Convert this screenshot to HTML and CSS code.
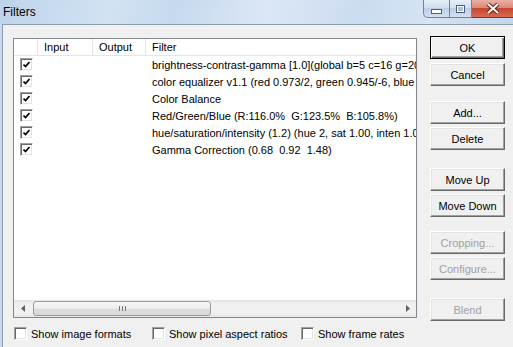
FILE: index.html
```html
<!DOCTYPE html>
<html lang="en">
<head>
    <meta charset="UTF-8">
    <title>Filters</title>
    <link rel="stylesheet" href="styles.css">
</head>
<body>
    <div class="window">
        <div class="titlebar">
            <span class="title">Filters</span>
            <div class="caption">
                <span class="cap min"><span class="min-bar"></span></span>
                <span class="cap max"><span class="max-box"></span></span>
                <span class="cap close">
                    <svg width="14" height="11" viewBox="0 0 14 11"><path d="M2 1 L12 10 M12 1 L2 10" stroke="#5a1a10" stroke-width="4"/><path d="M2 1 L12 10 M12 1 L2 10" stroke="#fff" stroke-width="2.2"/></svg>
                </span>
            </div>
        </div>
        <div class="client">
            <div class="main">
                <div class="listview">
                    <div class="lv-header">
                        <div class="col c-check"></div>
                        <div class="col c-input">Input</div>
                        <div class="col c-output">Output</div>
                        <div class="col c-filter">Filter</div>
                    </div>
                    <div class="lv-body">
                        <div class="row"><div class="c-check"><span class="check on"></span></div><div class="c-input"></div><div class="c-output"></div><div class="c-filter">brightness-contrast-gamma [1.0](global b=5 c=16 g=20)</div></div>
                        <div class="row"><div class="c-check"><span class="check on"></span></div><div class="c-input"></div><div class="c-output"></div><div class="c-filter">color equalizer v1.1 (red 0.973/2, green 0.945/-6, blue 1.000/0)</div></div>
                        <div class="row"><div class="c-check"><span class="check on"></span></div><div class="c-input"></div><div class="c-output"></div><div class="c-filter">Color Balance</div></div>
                        <div class="row"><div class="c-check"><span class="check on"></span></div><div class="c-input"></div><div class="c-output"></div><div class="c-filter">Red/Green/Blue (R:116.0%  G:123.5%  B:105.8%)</div></div>
                        <div class="row"><div class="c-check"><span class="check on"></span></div><div class="c-input"></div><div class="c-output"></div><div class="c-filter">hue/saturation/intensity (1.2) (hue 2, sat 1.00, inten 1.00)</div></div>
                        <div class="row"><div class="c-check"><span class="check on"></span></div><div class="c-input"></div><div class="c-output"></div><div class="c-filter">Gamma Correction (0.68  0.92  1.48)</div></div>
                    </div>
                    <div class="hscroll">
                        <span class="arrow"><svg width="4" height="7" viewBox="0 0 4 7"><path d="M4 0 L0 3.5 L4 7 Z" fill="#606060"/></svg></span>
                        <div class="track">
                            <div class="thumb"><span class="grip"></span></div>
                        </div>
                        <span class="arrow"><svg width="4" height="7" viewBox="0 0 4 7"><path d="M0 0 L4 3.5 L0 7 Z" fill="#606060"/></svg></span>
                    </div>
                </div>
                <div class="options">
                    <label class="opt"><span class="check"></span>Show image formats</label>
                    <label class="opt"><span class="check"></span>Show pixel aspect ratios</label>
                    <label class="opt"><span class="check"></span>Show frame rates</label>
                </div>
            </div>
            <div class="buttons">
                <div class="group">
                    <button class="btn default">OK</button>
                    <button class="btn">Cancel</button>
                </div>
                <div class="group g2">
                    <button class="btn">Add...</button>
                    <button class="btn">Delete</button>
                </div>
                <div class="group g3">
                    <button class="btn">Move Up</button>
                    <button class="btn">Move Down</button>
                </div>
                <div class="group g4">
                    <button class="btn" disabled>Cropping...</button>
                    <button class="btn" disabled>Configure...</button>
                </div>
                <div class="group g5">
                    <button class="btn" disabled>Blend</button>
                </div>
            </div>
        </div>
    </div>
</body>
</html>
```

FILE: styles.css
```css
body { margin: 0; font-family: "Liberation Sans", Arial, sans-serif; font-size: 11px; color: #000; }
.window { width: 513px; height: 347px; overflow: hidden; display: flex; flex-direction: column; background: #c8daef; }

.titlebar { height: 24px; flex: none; display: flex; justify-content: space-between; align-items: flex-start; background: linear-gradient(105deg, #bed3eb 0%, #d2e2f3 22%, #c6d9ee 34%, #dbe7f5 52%, #cbdcf0 70%, #d6e4f3 84%, #c1d5ec 100%); }
.title { font-size: 12px; padding: 5px 0 0 3px; }
.caption { display: flex; margin-right: -2px; }
.cap { height: 18px; box-sizing: border-box; display: flex; align-items: center; justify-content: center; border: 1px solid #71839b; border-top: none; }
.cap.min { width: 27px; border-radius: 0 0 0 5px; background: linear-gradient(#e6eef8, #d2dfef 45%, #bccde4 50%, #d3e0f0); }
.cap.max { width: 22px; border-left: none; background: linear-gradient(#e6eef8, #d2dfef 45%, #bccde4 50%, #d3e0f0); }
.cap.close { width: 43px; border-left: none; border-color: #7d3128; background: linear-gradient(#eab0a3, #d98a7b 45%, #c5452f 50%, #d96a52); }
.min-bar { width: 9px; height: 3px; margin-top: 5px; background: #fff; border: 1px solid #4c5e78; }
.max-box { width: 7px; height: 6px; border: 1px solid #4c5e78; box-shadow: inset 0 0 0 1px #fff; background: #aebfd7; }

.client { flex: 1; display: flex; gap: 13px; margin-left: 2px; padding: 11px 0 0 10px; background: #f0f0f0; border-top: 1px solid #8b9cb1; border-left: 1px solid #8b9cb1; }
.main { width: 404px; flex: none; padding-top: 2px; }

.listview { height: 280px; box-sizing: border-box; display: flex; flex-direction: column; background: #fff; border: 1px solid #828790; }
.lv-header { height: 17px; flex: none; display: flex; box-sizing: border-box; border-bottom: 1px solid #e5e5e5; }
.col { line-height: 16px; box-sizing: border-box; border-right: 1px solid #e5e5e5; }
.c-check { width: 24px; flex: none; }
.c-input { width: 55px; flex: none; padding-left: 6px; box-sizing: border-box; }
.c-output { width: 53px; flex: none; padding-left: 6px; box-sizing: border-box; }
.c-filter { flex: 1; padding-left: 6px; border-right: none; }

.lv-body { flex: 1; }
.row { height: 17px; display: flex; align-items: center; white-space: pre; overflow: hidden; }
.row .c-check { display: flex; padding-left: 6px; box-sizing: border-box; }

.check { width: 13px; height: 13px; box-sizing: border-box; display: inline-block; flex: none; background: #fff; border: 1px solid; border-color: #a0a0a0 #fff #fff #a0a0a0; box-shadow: inset 1px 1px 0 #696969, inset -1px -1px 0 #e3e3e3; }
.check.on { background: #fff url("data:image/svg+xml,%3Csvg xmlns='http://www.w3.org/2000/svg' width='7' height='7'%3E%3Cpath d='M0.5 3.5 L2.5 5.5 L6.5 1' fill='none' stroke='%23000' stroke-width='1.7'/%3E%3C/svg%3E") no-repeat 2px 2px; }

.hscroll { height: 17px; flex: none; display: flex; background: linear-gradient(#e2e2e2, #f0f0f0 20%, #f0f0f0 80%, #e6e6e6); }
.arrow { width: 17px; display: flex; align-items: center; justify-content: center; }
.track { flex: 1; padding: 1px 0 1px 2px; }
.thumb { width: 178px; height: 15px; box-sizing: border-box; display: flex; align-items: center; justify-content: center; border: 1px solid #9c9c9c; border-radius: 3px; background: linear-gradient(#f6f6f6, #ebebeb 50%, #dcdcdc 51%, #d9d9d9); }
.grip { width: 7px; height: 5px; background: repeating-linear-gradient(90deg, #777 0 1px, transparent 1px 3px); }

.options { display: grid; grid-template-columns: 138px 149px auto; margin-top: 9px; padding-left: 1px; }
.opt { display: flex; align-items: center; gap: 4px; white-space: nowrap; }

.buttons { width: 75px; flex: none; display: flex; flex-direction: column; }
.group { display: flex; flex-direction: column; gap: 3px; }
.group:first-child { gap: 4px; }
.g2 { margin-top: 15px; }
.g3 { margin-top: 18px; }
.g4 { margin-top: 14px; }
.g5 { margin-top: 18px; }
.btn { height: 23px; width: 75px; padding: 0; font-family: inherit; font-size: 11px; color: #000; background: #f0f0f0; border: 1px solid; border-color: #fff #696969 #696969 #fff; box-shadow: inset -1px -1px 0 #a0a0a0, inset 1px 1px 0 #e3e3e3; }
.btn.default { border-color: #000; box-shadow: inset 1px 1px 0 #fff, inset -1px -1px 0 #696969, inset -2px -2px 0 #a0a0a0; }
.btn:disabled { color: #a0a0a0; }
```
